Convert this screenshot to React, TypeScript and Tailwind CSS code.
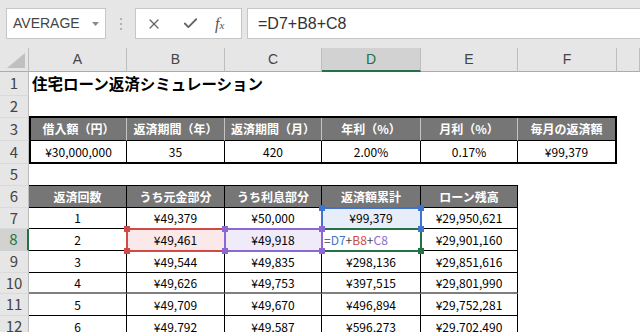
import React from 'react';
import { X, Check } from 'lucide-react';

type BK = 'none' | 'thin' | 'thick' | 'light' | 'gray';

const RB: Record<BK, string> = {
  none: '',
  thin: 'border-r border-r-black',
  thick: 'border-r-2 border-r-black',
  light: 'border-r border-r-[#c4c4c4]',
  gray: 'border-r-2 border-r-[#808080]',
};
const BB: Record<BK, string> = {
  none: '',
  thin: 'border-b border-b-black',
  thick: 'border-b-2 border-b-black',
  light: 'border-b border-b-[#c4c4c4]',
  gray: 'border-b-2 border-b-[#7f7f7f]',
};

const COL_LETTERS = ['A', 'B', 'C', 'D', 'E', 'F', ''];

const data: Record<number, string[]> = {
  3: ['借入額（円）', '返済期間（年）', '返済期間（月）', '年利（%）', '月利（%）', '毎月の返済額'],
  4: ['¥30,000,000', '35', '420', '2.00%', '0.17%', '¥99,379'],
  6: ['返済回数', 'うち元金部分', 'うち利息部分', '返済額累計', 'ローン残高'],
  7: ['1', '¥49,379', '¥50,000', '¥99,379', '¥29,950,621'],
  8: ['2', '¥49,461', '¥49,918', '', '¥29,901,160'],
  9: ['3', '¥49,544', '¥49,835', '¥298,136', '¥29,851,616'],
  10: ['4', '¥49,626', '¥49,753', '¥397,515', '¥29,801,990'],
  11: ['5', '¥49,709', '¥49,670', '¥496,894', '¥29,752,281'],
  12: ['6', '¥49,792', '¥49,587', '¥596,273', '¥29,702,490'],
};

function borders(r: number, c: number): string {
  let right: BK = 'none';
  let bottom: BK = 'none';
  let left = '';
  if (r === 2 && c >= 1 && c <= 6) bottom = 'thick';
  if (r === 3 && c >= 1 && c <= 6) {
    right = c === 6 ? 'thick' : 'light';
    bottom = 'thin';
    if (c === 1) left = 'border-l-2 border-l-black';
  }
  if (r === 4 && c >= 1 && c <= 6) {
    right = c === 6 ? 'thick' : 'thin';
    bottom = 'thick';
    if (c === 1) left = 'border-l-2 border-l-black';
  }
  if (r === 5 && c >= 1 && c <= 5) bottom = 'thin';
  if (r >= 6 && c >= 1 && c <= 5) {
    right = 'thin';
    bottom = r === 10 ? 'gray' : 'thin';
  }
  return [RB[right], BB[bottom], left].join(' ');
}

function fill(r: number, c: number): string {
  if ((r === 3 && c >= 1 && c <= 6) || (r === 6 && c >= 1 && c <= 5)) return 'bg-[#767676] text-white font-bold';
  if (r === 7 && c === 4) return 'bg-[#e7eef9]';
  if (r === 8 && c === 2) return 'bg-[#fbe8e8]';
  if (r === 8 && c === 3) return 'bg-[#efebf9]';
  return '';
}

function Handle({ pos, color }: { pos: string; color: string }) {
  return <div className={`absolute w-[6px] h-[6px] z-10 ${pos} ${color}`} />;
}

export default function App() {
  const rows = [1, 2, 3, 4, 5, 6, 7, 8, 9, 10, 11, 12];
  return (
    <div
      className="w-[640px] h-[332px] overflow-hidden bg-white text-black"
      style={{ fontFamily: '"Noto Sans CJK JP", "Noto Sans", sans-serif' }}
    >
      {/* Formula bar */}
      <div className="h-[48px] bg-[#e6e6e6] flex items-start pt-[8px] pl-[6px]">
        <div className="w-[100px] h-[31px] bg-white border border-[#c6c6c6] flex items-center justify-between pl-[6px] pr-[6px]">
          <span className="text-[14px] text-[#444]" style={{ fontFamily: '"Liberation Sans", sans-serif' }}>AVERAGE</span>
          <svg width="7" height="4" viewBox="0 0 7 4"><path d="M0 0 L7 0 L3.5 4 Z" fill="#8a8a8a" /></svg>
        </div>
        <div className="w-[29px] h-[31px] flex flex-col items-center justify-center gap-[3px]">
          <div className="w-[2px] h-[2px] bg-[#b4b4b4]" />
          <div className="w-[2px] h-[2px] bg-[#b4b4b4]" />
          <div className="w-[2px] h-[2px] bg-[#b4b4b4]" />
        </div>
        <div className="w-[107px] h-[31px] bg-white border border-[#c6c6c6] flex items-center pl-[10px]">
          <X size={16} strokeWidth={1.8} color="#666" />
          <Check size={17} strokeWidth={2.6} color="#666" className="ml-[20px]" />
          <span className="ml-[16px] text-[16px] italic text-[#555] leading-none" style={{ fontFamily: '"Liberation Serif", serif' }}>
            f<span className="text-[11px]">x</span>
          </span>
        </div>
        <div className="ml-[5px] flex-1 h-[31px] bg-white border border-[#c6c6c6] border-r-0 flex items-center pl-[10px]">
          <span className="text-[16px] text-[#333]" style={{ fontFamily: '"Liberation Sans", sans-serif' }}>=D7+B8+C8</span>
        </div>
      </div>

      {/* Sheet */}
      <div className="relative">
        <div className="grid grid-cols-[29px_98px_98px_97px_99px_97px_99px_1fr] grid-rows-[24px_24px_22px_23px_23px_22px_22px_21px_22px_22px_21px_22px_22px]">
          <div className="bg-[#e6e6e6] border-r border-r-[#bdbdbd] border-b border-b-[#ababab] relative">
            <svg className="absolute right-[3px] bottom-[3px]" width="18" height="15" viewBox="0 0 18 15">
              <path d="M18 0 L18 15 L0 15 Z" fill="#c0c0c0" />
            </svg>
          </div>
          {COL_LETTERS.map((l, i) =>
            l === 'D' ? (
              <div key={i} className="bg-[#d2d2d2] border-r border-r-[#bdbdbd] border-b-2 border-b-[#217346] flex items-center justify-center text-[14px] text-[#217346]" style={{ fontFamily: '"Liberation Sans", sans-serif' }}>
                {l}
              </div>
            ) : (
              <div key={i} className="bg-[#e6e6e6] border-r border-r-[#bdbdbd] border-b border-b-[#ababab] flex items-center justify-center text-[14px] text-[#444]" style={{ fontFamily: '"Liberation Sans", sans-serif' }}>
                {l}
              </div>
            )
          )}
          {rows.map((r) => (
            <React.Fragment key={r}>
              {r === 8 ? (
                <div className="bg-[#d2d2d2] border-r-2 border-r-[#217346] border-b border-b-[#d0d0d0] flex items-center justify-center text-[15px] text-[#217346]">
                  {r}
                </div>
              ) : (
                <div className="bg-[#e6e6e6] border-r border-r-[#bdbdbd] border-b border-b-[#dadada] flex items-center justify-center text-[15px] text-[#444]">
                  {r}
                </div>
              )}
              {[1, 2, 3, 4, 5, 6, 7].map((c) => {
                const txt = data[r]?.[c - 1] ?? '';
                if (r === 1 && c === 1) {
                  return (
                    <div key={c} className="relative z-[1] flex items-center pl-[3px] whitespace-nowrap overflow-visible text-[15.5px] font-bold">
                      住宅ローン返済シミュレーション
                    </div>
                  );
                }
                if (r === 8 && c === 4) {
                  return (
                    <div key={c} className={`flex items-center pl-[2px] text-[12px] ${borders(r, c)}`}>
                      <span className="text-[#444]">=</span>
                      <span className="text-[#3f73cc]">D7</span>
                      <span className="text-[#444]">+</span>
                      <span className="text-[#d04a4a]">B8</span>
                      <span className="text-[#444]">+</span>
                      <span className="text-[#8b68d4]">C8</span>
                    </div>
                  );
                }
                return (
                  <div key={c} className={`flex items-center justify-center text-[12px] whitespace-nowrap ${borders(r, c)} ${fill(r, c)}`}>
                    {txt}
                  </div>
                );
              })}
            </React.Fragment>
          ))}
        </div>

        {/* Reference highlight boxes */}
        <div className="absolute left-[321px] top-[159px] w-[101px] h-[23px] border-2 border-[#3f73cc]">
          <Handle pos="-left-[4px] -top-[4px]" color="bg-[#3f73cc]" />
          <Handle pos="-right-[4px] -top-[4px]" color="bg-[#3f73cc]" />
          <Handle pos="-right-[4px] -bottom-[4px]" color="bg-[#3f73cc]" />
        </div>
        <div className="absolute left-[321px] top-[180px] w-[101px] h-[24px] border-2 border-[#217346]">
          <Handle pos="-right-[4px] -bottom-[4px]" color="bg-[#217346]" />
        </div>
        <div className="absolute left-[126px] top-[180px] w-[100px] h-[24px] border-2 border-[#d04a4a]">
          <Handle pos="-left-[4px] -top-[4px]" color="bg-[#d04a4a]" />
          <Handle pos="-left-[4px] -bottom-[4px]" color="bg-[#d04a4a]" />
        </div>
        <div className="absolute left-[224px] top-[180px] w-[99px] h-[24px] border-2 border-[#8b68d4]">
          <div className="absolute w-[6px] h-[6px] z-20 -left-[4px] -top-[4px] bg-[#8b68d4]" />
          <div className="absolute w-[6px] h-[6px] z-20 -left-[4px] -bottom-[4px] bg-[#8b68d4]" />
          <div className="absolute w-[6px] h-[6px] z-20 -right-[4px] -top-[4px] bg-[#8b68d4]" />
          <div className="absolute w-[6px] h-[6px] z-20 -right-[4px] -bottom-[4px] bg-[#8b68d4]" />
        </div>
      </div>
    </div>
  );
}
